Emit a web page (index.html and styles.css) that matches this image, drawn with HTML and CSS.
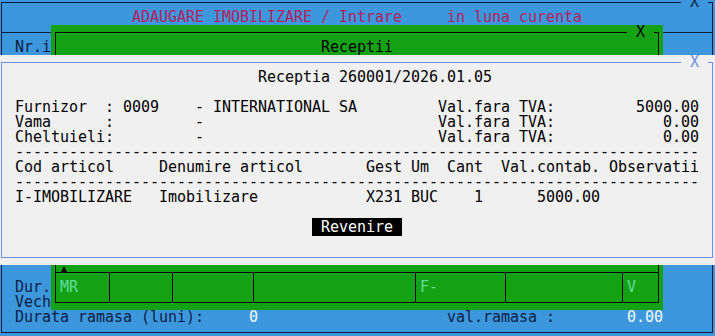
FILE: index.html
```html
<!DOCTYPE html>
<html lang="ro">
<head>
    <meta charset="UTF-8">
    <title>Adaugare imobilizare</title>
    <link rel="stylesheet" href="styles.css">
</head>
<body>

<!-- fereastra principala -->
<div class="win main">
    <div class="frame">
        <div class="cap"><span class="close">X</span></div>
        <div class="row title">             ADAUGARE IMOBILIZARE / Intrare     in luna curenta</div>
        <div class="sep"></div>
        <div class="row">Nr.i</div>
        <div class="rows-main"></div>
        <div class="row">Dur.</div>
        <div class="row">Vech</div>
        <div class="row">Durata ramasa (luni):     <span class="val">0</span>                     val.ramasa :        <span class="val">0.00</span></div>
    </div>
</div>

<!-- lista receptii -->
<div class="win list">
    <div class="frame">
        <div class="cap"><span class="close">X</span></div>
        <div class="row">                            Receptii</div>
        <div class="rows-list"></div>
        <div class="marks"><i class="arrow"></i></div>
        <div class="tabs">
            <span>MR</span>
            <span></span>
            <span></span>
            <span></span>
            <span>F-</span>
            <span></span>
            <span>V</span>
        </div>
    </div>
</div>

<!-- detaliu receptie -->
<div class="win detail">
    <div class="frame">
        <div class="cap"><span class="close">X</span></div>
        <div class="row">                           Receptia 260001/2026.01.05</div>
        <div class="row"></div>
        <div class="row">Furnizor  : 0009    - INTERNATIONAL SA         Val.fara TVA:         5000.00</div>
        <div class="row">Vama      :         -                          Val.fara TVA:            0.00</div>
        <div class="row">Cheltuieli:         -                          Val.fara TVA:            0.00</div>
        <div class="row">----------------------------------------------------------------------------</div>
        <div class="row">Cod articol     Denumire articol       Gest Um  Cant  Val.contab. Observatii</div>
        <div class="row">----------------------------------------------------------------------------</div>
        <div class="row">I-IMOBILIZARE   Imobilizare            X231 BUC    1      5000.00</div>
        <div class="row"></div>
        <div class="row">                                 <span class="btn"> Revenire </span></div>
    </div>
</div>

</body>
</html>
```

FILE: styles.css
```css
html, body {
    margin: 0;
    padding: 0;
}

* {
    box-sizing: border-box;
}

body {
    position: relative;
    width: 715px;
    height: 336px;
    overflow: hidden;
    background: #3d97dd;
    font-family: "DejaVu Sans Mono", monospace;
    font-size: 15px;
    line-height: 15px;
    letter-spacing: -0.03px; /* celula de 9px */
}

/* ferestre */

.win {
    position: absolute;
    display: flex;
    flex-direction: column;
    background: var(--bg);
}

.frame {
    flex: 1;
    display: flex;
    flex-direction: column;
    min-height: 0;
    margin: 7px 4px;
    border: 1px solid var(--line);
}

.cap {
    flex: none;
    display: flex;
    justify-content: flex-end;
    height: 15px;
    margin-top: -8px;
}

.close {
    width: 27px;
    margin-right: 4px;
    text-align: center;
    background: var(--bg);
    color: var(--line);
}

.row {
    flex: none;
    height: 15px;
    padding-left: 13px;
    white-space: pre;
}

.main {
    --bg: #3d97dd;
    --line: #0c1d44;
    left: -3px;
    top: -5px;
    width: 720px;
    height: 345px;
    color: #0c1d44;
}

.main .title {
    color: #b8205a;
}

.main .sep {
    flex: none;
    height: 8px;
    margin-bottom: 7px;
    border-bottom: 1px solid var(--line);
}

.main .rows-main {
    flex: none;
    height: 225px;
}

.main .val {
    color: #f4f8ff;
}

.list {
    --bg: #14a214;
    --line: #000;
    left: 51px;
    top: 25px;
    width: 612px;
    height: 285px;
    color: #000;
}

.list .rows-list {
    flex: none;
    height: 210px;
}

.list .marks {
    flex: none;
    display: flex;
    align-items: flex-end;
    height: 7px;
    padding-left: 5px;
}

.list .arrow {
    width: 0;
    height: 0;
    border-left: 3px solid transparent;
    border-right: 3px solid transparent;
    border-bottom: 6px solid #000;
}

.tabs {
    flex: 1;
    display: grid;
    grid-template-columns: 54px 63px 81px 162px 90px 117px 1fr;
    border-top: 1px solid var(--line);
}

.tabs span {
    padding: 7px 0 0 4px;
    border-right: 1px solid var(--line);
    color: #62dca0;
}

.tabs span:last-child {
    border-right: 0;
}

.detail {
    --bg: #f0f0f0;
    --line: #6a8de6;
    left: -3px;
    top: 55px;
    width: 720px;
    height: 210px;
    color: #000;
}

.detail .btn {
    background: #000;
    color: #fff;
}
```
